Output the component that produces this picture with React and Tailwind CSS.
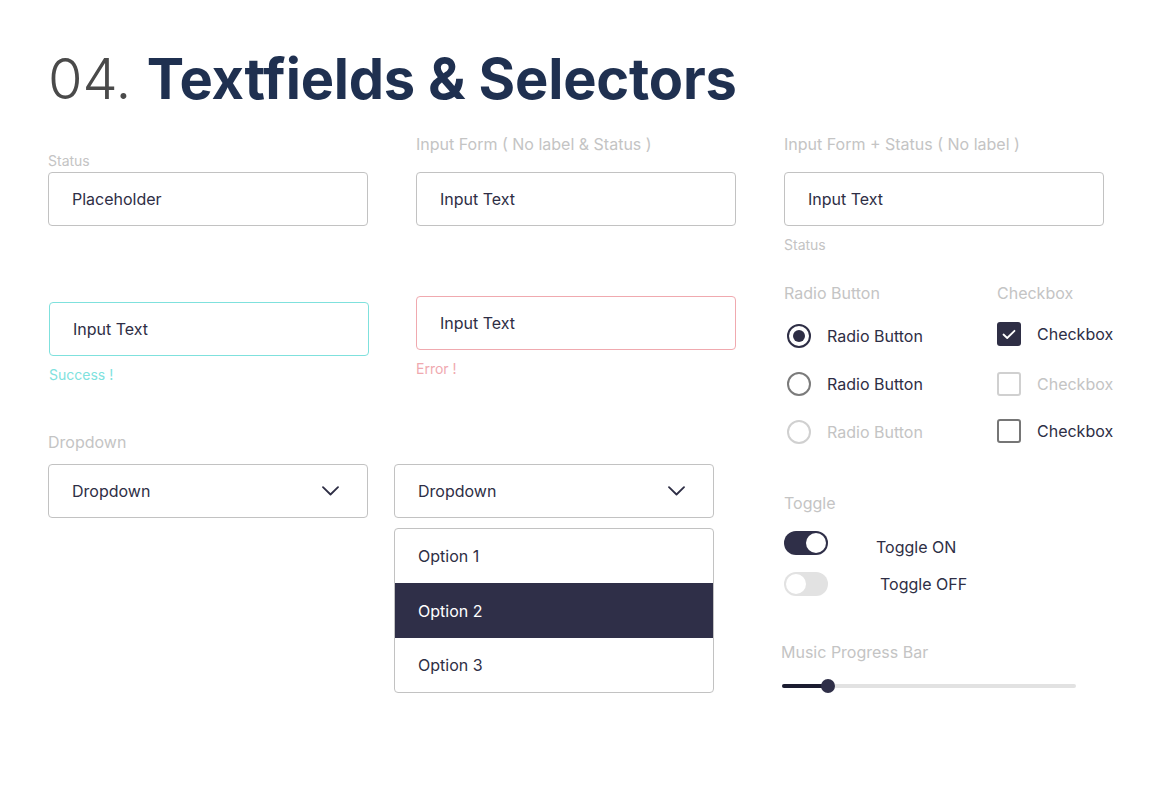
import React from 'react';

const ink = 'text-[#2e2e45]';

const Chevron = () => (
  <svg width="17" height="10" viewBox="0 0 17 10" fill="none">
    <path d="M1 1.2 L8.5 8.5 L16 1.2" stroke="#2e2e45" strokeWidth="1.8" strokeLinecap="round" strokeLinejoin="round" />
  </svg>
);

const Field = ({ text, border = 'border-[#c2c2c2]', className = '' }) => (
  <div className={`h-[54px] w-[320px] rounded-[4px] border bg-white pl-[23px] flex items-center text-[16px] ${ink} ${border} ${className}`}>
    {text}
  </div>
);

const Dropdown = ({ className = '' }) => (
  <div className={`h-[54px] w-[320px] rounded-[4px] border border-[#c2c2c2] pl-[23px] pr-7 flex items-center justify-between text-[16px] ${ink} ${className}`}>
    <span>Dropdown</span>
    <Chevron />
  </div>
);

const Radio = ({ state }) => {
  const ring =
    state === 'on' ? 'border-[#2e2e45]' : state === 'off' ? 'border-[#7b7b7b]' : 'border-[#d0d0d0]';
  return (
    <div className="h-12 flex items-center">
      <div className={`ml-[3px] w-6 h-6 rounded-full border-2 flex items-center justify-center ${ring}`}>
        {state === 'on' && <div className="w-3 h-3 rounded-full bg-[#2e2e45]" />}
      </div>
      <span className={`ml-4 text-[16px] ${state === 'disabled' ? 'text-[#c4c4c4]' : ink}`}>Radio Button</span>
    </div>
  );
};

const Check = ({ state, className = '' }) => (
  <div className={`h-12 flex items-center ${className}`}>
    {state === 'on' ? (
      <div className="w-6 h-6 rounded-[3px] bg-[#2e2e45] flex items-center justify-center">
        <svg width="14" height="11" viewBox="0 0 14 11" fill="none">
          <path d="M1.5 5.5 L5.2 9 L12.5 1.8" stroke="white" strokeWidth="1.8" strokeLinecap="round" strokeLinejoin="round" />
        </svg>
      </div>
    ) : (
      <div className={`w-6 h-6 rounded-[3px] border-2 ${state === 'off' ? 'border-[#767676]' : 'border-[#d0d0d0]'}`} />
    )}
    <span className={`ml-4 text-[16px] whitespace-nowrap ${state === 'disabled' ? 'text-[#c4c4c4]' : ink}`}>Checkbox</span>
  </div>
);

export default function App() {
  return (
    <div className="w-[1152px] h-[807px] bg-white" style={{ fontFamily: 'Inter, "Noto Sans", sans-serif' }}>
      <div className="pl-12 pt-[43px]">
        <h1 className="text-[56px] leading-[72px] tracking-[-0.2px]">
          <span className="font-light text-[#4a4a4a]">04. </span>
          <span className="font-bold text-[#1f3050]">Textfields &amp; Selectors</span>
        </h1>
      </div>

      <div className="flex pl-12 gap-12 mt-[3px]">
        {/* column 1 */}
        <div className="w-[320px] shrink-0 flex flex-col pt-[34px]">
          <div className="text-[14px] leading-[18px] text-[#c4c4c4]">Status</div>
          <Field text="Placeholder" className="mt-[2px]" />
          <Field text="Input Text" border="border-[#7fe1dd]" className="mt-[76px] ml-px" />
          <div className="mt-[10px] ml-px text-[14px] leading-[18px] text-[#80e2de]">Success !</div>
          <div className="mt-[48px] text-[16px] leading-5 text-[#c4c4c4]">Dropdown</div>
          <Dropdown className="mt-3" />
        </div>

        {/* column 2 */}
        <div className="w-[320px] shrink-0 flex flex-col pt-4">
          <div className="text-[16px] leading-5 text-[#c4c4c4]">Input Form ( No label &amp; Status )</div>
          <Field text="Input Text" className="mt-[18px]" />
          <Field text="Input Text" border="border-[#f0a9af]" className="mt-[70px]" />
          <div className="mt-[10px] text-[14px] leading-[18px] text-[#f0a9af]">Error !</div>
          <Dropdown className="mt-[86px] -ml-[22px]" />
          <div className="mt-[10px] -ml-[22px] w-[320px] rounded-[4px] border border-[#c2c2c2] overflow-hidden">
            <div className={`h-[54px] pl-[23px] flex items-center text-[16px] ${ink}`}>Option 1</div>
            <div className="h-[55px] pl-[23px] flex items-center text-[16px] bg-[#2f2f48] text-white">Option 2</div>
            <div className={`h-[54px] pl-[23px] flex items-center text-[16px] ${ink}`}>Option 3</div>
          </div>
        </div>

        {/* column 3 */}
        <div className="w-[320px] shrink-0 flex flex-col pt-4">
          <div className="text-[16px] leading-5 text-[#c4c4c4]">Input Form + Status ( No label )</div>
          <Field text="Input Text" className="mt-[18px]" />
          <div className="mt-[10px] text-[14px] leading-[18px] text-[#c4c4c4]">Status</div>

          <div className="mt-[29px] flex">
            <div className="w-[213px] shrink-0">
              <div className="text-[16px] leading-5 text-[#c4c4c4]">Radio Button</div>
              <div className="mt-[9px]">
                <Radio state="on" />
                <Radio state="off" />
                <Radio state="disabled" />
              </div>
            </div>
            <div className="shrink-0">
              <div className="text-[16px] leading-5 text-[#c4c4c4]">Checkbox</div>
              <div className="mt-[7px]">
                <Check state="on" />
                <Check state="disabled" className="mt-[2px]" />
                <Check state="off" className="-mt-[1px]" />
              </div>
            </div>
          </div>

          <div className="mt-[37px] text-[16px] leading-5 text-[#c4c4c4]">Toggle</div>
          <div className="mt-[18px] flex items-center">
            <div className="w-11 h-6 rounded-full bg-[#2f2f48] flex items-center justify-end pr-[2px]">
              <div className="w-5 h-5 rounded-full bg-white" />
            </div>
            <span className={`ml-12 translate-y-1 text-[16px] ${ink}`}>Toggle ON</span>
          </div>
          <div className="mt-[17px] flex items-center">
            <div className="w-11 h-6 rounded-full bg-[#e2e2e2] flex items-center pl-[2px]">
              <div className="w-5 h-5 rounded-full bg-white" />
            </div>
            <span className={`ml-[52px] text-[16px] ${ink}`}>Toggle OFF</span>
          </div>

          <div className="mt-[46px] -ml-[3px] text-[16px] leading-5 text-[#c4c4c4]">Music Progress Bar</div>
          <div className="mt-[17px] -ml-[2px] w-[294px] h-[14px] relative flex items-center">
            <div className="w-full h-1 rounded-full bg-[#e2e2e2]">
              <div className="w-[46px] h-1 rounded-full bg-[#1b1c30]" />
            </div>
            <div className="absolute left-[39px] top-0 w-[14px] h-[14px] rounded-full bg-[#2f2f48]" />
          </div>
        </div>
      </div>
    </div>
  );
}
